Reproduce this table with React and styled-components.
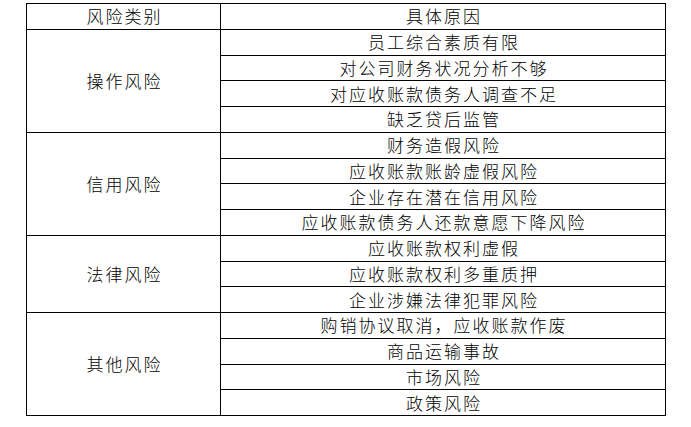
import React from "react";
import styled, { createGlobalStyle } from "styled-components";

const Global = createGlobalStyle`
  html, body {
    margin: 0;
    padding: 0;
    background: #ffffff;
  }
  body {
    font-family: "Noto Sans CJK SC", "Noto Sans", sans-serif;
    color: #000;
  }
`;

const Page = styled.div`
  padding: 3px 0 0 26px;
`;

const Table = styled.table`
  border-collapse: collapse;
  table-layout: fixed;
  width: 639px;
  border: 1px solid #000;
`;

const Row = styled.tr`
  height: 25.75px;
`;

const Cell = styled.td`
  border: 1px solid #000;
  padding: 0 0 0 2px;
  height: 24.75px;
  text-align: center;
  vertical-align: middle;
  font-size: 17px;
  line-height: 20px;
  letter-spacing: 2px;
  font-weight: 300;
  color: #000;
  white-space: nowrap;
`;

const HeaderCell = styled(Cell).attrs({ as: "th" })`
  font-weight: 300;
`;

const CategoryCell = styled(Cell)``;

const groups = [
  {
    name: "操作风险",
    items: ["员工综合素质有限", "对公司财务状况分析不够", "对应收账款债务人调查不足", "缺乏贷后监管"],
  },
  {
    name: "信用风险",
    items: ["财务造假风险", "应收账款账龄虚假风险", "企业存在潜在信用风险", "应收账款债务人还款意愿下降风险"],
  },
  {
    name: "法律风险",
    items: ["应收账款权利虚假", "应收账款权利多重质押", "企业涉嫌法律犯罪风险"],
  },
  {
    name: "其他风险",
    items: ["购销协议取消，应收账款作废", "商品运输事故", "市场风险", "政策风险"],
  },
];

export default function App() {
  return (
    <>
      <Global />
      <Page>
        <Table>
          <colgroup>
            <col style={{ width: "194px" }} />
            <col style={{ width: "445px" }} />
          </colgroup>
          <thead>
            <Row>
              <HeaderCell>风险类别</HeaderCell>
              <HeaderCell>具体原因</HeaderCell>
            </Row>
          </thead>
          <tbody>
            {groups.map((g) =>
              g.items.map((item, i) => (
                <Row key={g.name + i}>
                  {i === 0 && <CategoryCell rowSpan={g.items.length}>{g.name}</CategoryCell>}
                  <Cell>{item}</Cell>
                </Row>
              ))
            )}
          </tbody>
        </Table>
      </Page>
    </>
  );
}
